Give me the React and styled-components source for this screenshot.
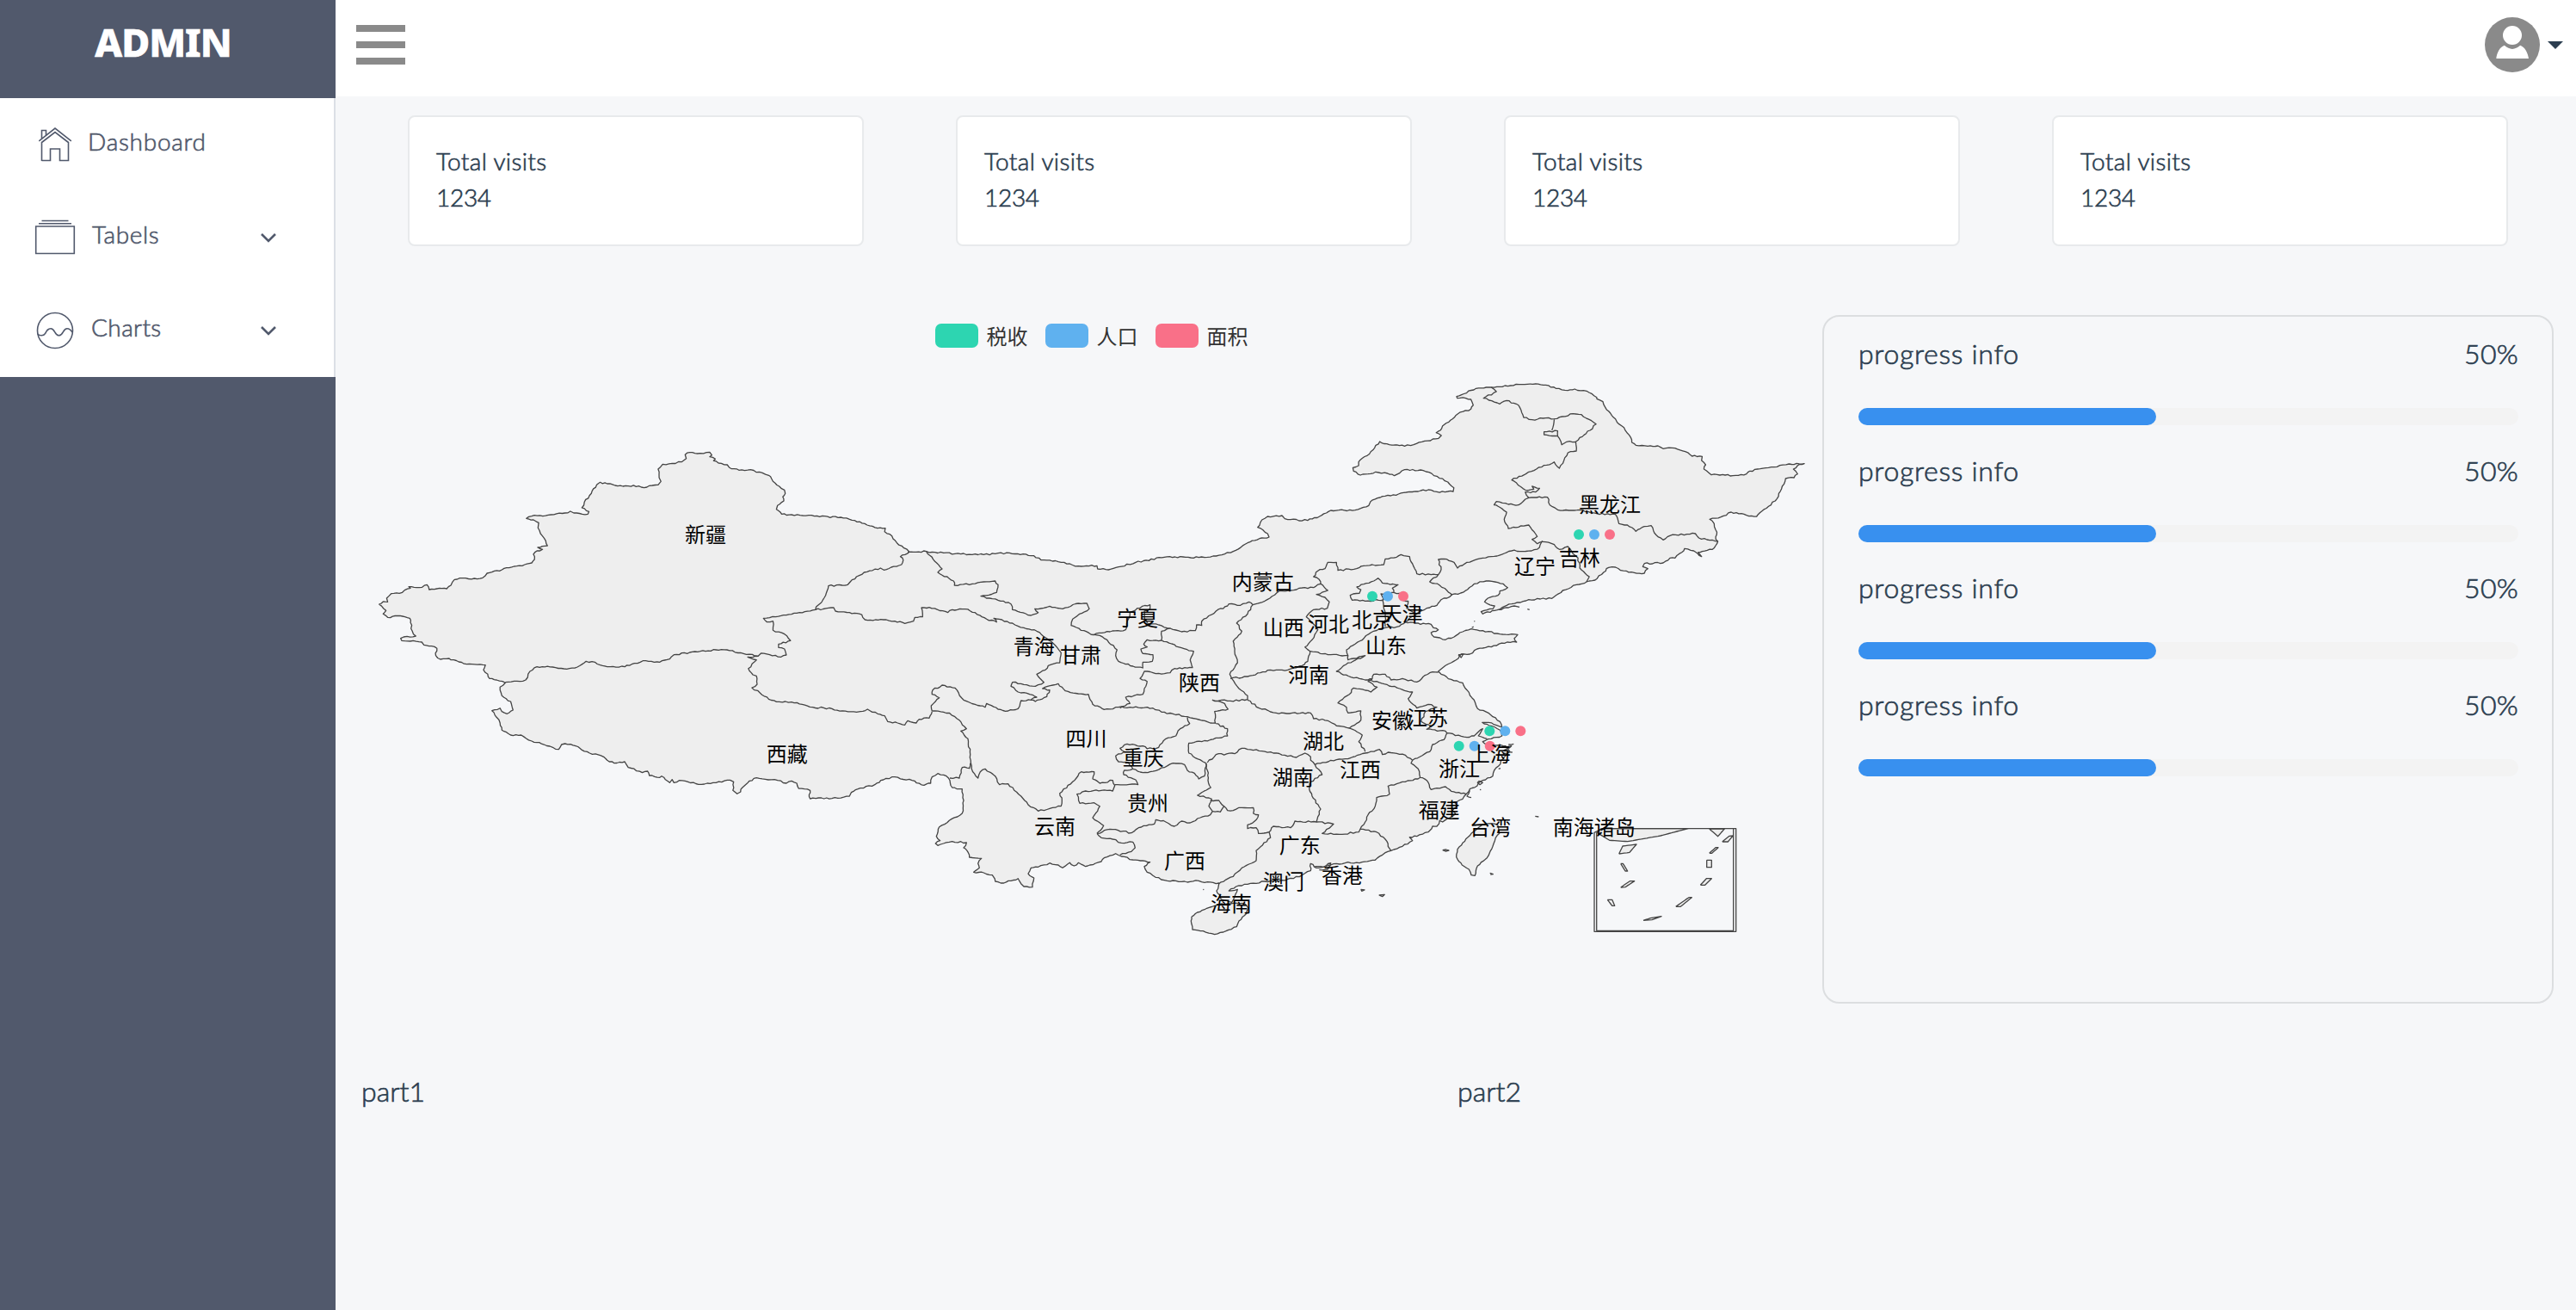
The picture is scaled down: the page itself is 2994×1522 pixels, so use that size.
import React from "react";
import styled, { createGlobalStyle } from "styled-components";

const GlobalStyle = createGlobalStyle`
  *, *::before, *::after { box-sizing: border-box; }
  body {
    margin: 0;
    background: #f6f7f9;
    color: #2c3e50;
    font-family: Lato, "Noto Sans CJK SC", sans-serif;
    font-size: 28px;
    font-weight: 300;
    -webkit-text-stroke: 0.65px currentColor;
  }
`;

/* ---------- shell ---------- */

const Shell = styled.div`
  display: flex;
  width: 2994px;
  height: 1522px;
  overflow: hidden;
`;

const Sidebar = styled.aside`
  flex: none;
  width: 390px;
  background: #51596c;
`;

const Brand = styled.h1`
  display: flex;
  justify-content: center;
  height: 114px;
  margin: 0;
  padding: 19px 11px 0 0;
  color: #fff;
  font-family: "Noto Sans", sans-serif;
  font-size: 45px;
  font-weight: 800;
  line-height: 60px;
  letter-spacing: -1px;
`;

const Menu = styled.nav`
  background: #fff;
  border-right: 2px solid #dcdfe6;
`;

const MenuItem = styled.a`
  display: flex;
  align-items: center;
  height: 108px;
  padding: 0 66px 0 40px;
  color: #51596c;
`;

const MenuIcon = styled.svg`
  flex: none;
  width: 48px;
  height: 48px;
  fill: none;
  stroke: currentColor;
  stroke-width: 1.6;
`;

const MenuLabel = styled.span`
  flex: 1;
  padding: 0 0 9px ${(p) => p.$indent}px;
  letter-spacing: ${(p) => p.$spacing}px;
`;

const Chevron = styled.svg`
  width: 20px;
  height: 14px;
  fill: none;
  stroke: #51596c;
  stroke-width: 2.6;
`;

const Main = styled.main`
  flex: 1;
  min-width: 0;
`;

const TopBar = styled.header`
  display: flex;
  align-items: center;
  justify-content: space-between;
  height: 112px;
  padding: 0 15px 8px 23.5px;
  background: #fff;
`;

const Burger = styled.button`
  display: grid;
  gap: 11px;
  width: 57px;
  padding: 0;
  border: 0;
  background: none;
`;

const BurgerLine = styled.span`
  height: 8px;
  background: #8a8a8a;
`;

const Account = styled.div`
  display: flex;
  align-items: center;
  gap: 9px;
`;

const Caret = styled.span`
  border: 9px solid transparent;
  border-top-color: #2c3e50;
  border-bottom: 0;
`;

/* ---------- stat cards ---------- */

const Cards = styled.section`
  display: grid;
  grid-template-columns: repeat(4, 530px);
  gap: 107px;
  padding: 22px 0 0 84px;
`;

const Card = styled.article`
  height: 152px;
  padding: 30px 31px;
  border: 2px solid #e8eaec;
  border-radius: 8px;
  background: #fff;
  line-height: 42px;
`;

const CardLine = styled.div`
  letter-spacing: ${(p) => p.$spacing}px;
`;

/* ---------- map and progress ---------- */

const Overview = styled.section`
  display: flex;
  height: 800px;
  margin-top: 80px;
  padding-left: 28px;
`;

const MapPanel = styled.div`
  flex: none;
  width: 1700px;
  padding-top: 10px;
`;

const Legend = styled.ul`
  display: flex;
  justify-content: center;
  gap: 20px;
  margin: 0 0 0 1px;
  padding: 0;
  list-style: none;
`;

const LegendItem = styled.li`
  display: flex;
  align-items: center;
  gap: 10px;
  height: 28px;
  color: #333;
  font-family: "Noto Sans CJK SC", sans-serif;
  font-size: 24px;
  font-weight: 400;
  line-height: 26px;
  -webkit-text-stroke: 0;
`;

const Swatch = styled.span`
  width: 50px;
  height: 28px;
  border-radius: 7px;
  background: ${(p) => p.$color};
`;

const MapSvg = styled.svg`
  display: block;
  width: 1700px;
  height: 730px;
`;

const Land = styled.path`
  fill: #eee;
  stroke: #444;
  stroke-width: 1.3;
  stroke-linejoin: round;
`;

const Border = styled.path`
  fill: none;
  stroke: #444;
  stroke-width: 1.3;
  stroke-linejoin: round;
`;

const MapLabel = styled.text`
  fill: #000;
  font-family: "Noto Sans CJK SC", sans-serif;
  font-size: 24px;
  font-weight: 400;
  text-anchor: middle;
  -webkit-text-stroke: 0;
`;

const ProgressPanel = styled.div`
  width: 850px;
  height: 800px;
  padding: 22px 39px 0 40px;
  border: 2px solid #dcdee0;
  border-radius: 20px;
`;

const ProgressItem = styled.div`
  height: 136px;
`;

const ProgressHead = styled.div`
  display: flex;
  justify-content: space-between;
  height: 84px;
  font-size: 32px;
  line-height: 41px;
`;

const ProgressText = styled.span`
  letter-spacing: ${(p) => p.$spacing}px;
`;

const Track = styled.div`
  height: 20px;
  border-radius: 10px;
  background: #f3f3f3;
`;

const Fill = styled.div`
  width: 346px;
  height: 20px;
  border-radius: 10px;
  background: #3890ef;
`;

const Parts = styled.section`
  display: grid;
  grid-template-columns: 1274px 1274px;
  padding: 81px 0 0 30px;
  font-size: 32px;
  line-height: 42px;
`;

/* ---------- map geometry ---------- */

const sheet = (ox, oy, sx, sy) => (list) => {
  const n = list.trim().split(/[\s,]+/).map(Number);
  const out = [];
  for (let i = 0; i < n.length; i += 2) out.push([ox + n[i] / sx, oy + n[i + 1] / sy]);
  return out;
};

const west = sheet(420, 500, 2.45, 3);
const mid = sheet(1000, 600, 3, 3);
const east = sheet(1380, 600, 3, 3);
const north = sheet(1500, 430, 2.529, 3);
const sea = sheet(1700, 880, 3, 3);

const noise = (x, y) => {
  const s = Math.sin(x * 12.9898 + y * 78.233) * 43758.5453;
  return (s - Math.floor(s)) * 2 - 1;
};

/* Breaks each segment into short uneven steps, like a surveyed boundary. */
const trace = (points, rough = 0.9) => {
  let d = `M${points[0][0].toFixed(1)} ${points[0][1].toFixed(1)}`;
  for (let i = 1; i < points.length; i++) {
    const [ax, ay] = points[i - 1];
    const [bx, by] = points[i];
    const len = Math.hypot(bx - ax, by - ay);
    const steps = Math.max(1, Math.round(len / 3.2));
    for (let k = 1; k < steps; k++) {
      const t = k / steps;
      const x = ax + (bx - ax) * t;
      const y = ay + (by - ay) * t;
      const o = noise(x, y) * rough;
      d += `L${(x - ((by - ay) / len) * o).toFixed(1)} ${(y + ((bx - ax) / len) * o).toFixed(1)}`;
    }
    d += `L${bx.toFixed(1)} ${by.toFixed(1)}`;
  }
  return d;
};

const mainland = [
  ...west(`50,606 62,597 75,598 72,585 85,569 108,568 140,550 135,545 165,548 187,538 193,555 215,552 243,552 255,540
    265,520 280,515 330,518 352,508 358,498 400,486 435,474 465,468 485,462 493,450 490,432 500,420 516,415 502,408
    515,404 530,402 525,385 510,360 503,340 505,322 490,312 470,307 485,299 540,294 580,288 595,282 605,288 645,292
    648,283 628,270 635,250 655,220 670,190 680,181 700,186 730,194 790,194 805,200 820,193 845,190 853,178 848,165
    845,135 858,118 885,115 912,110 925,98 922,85 935,77 965,80 992,76 998,86 992,92 1008,100 1003,106 1025,115
    1042,120 1048,130 1075,139 1108,137 1125,146 1142,148 1160,157 1168,168 1172,178 1190,195 1205,208 1207,220
    1200,232 1203,246 1185,262 1182,275 1197,292 1225,294 1290,299 1365,303 1405,314 1440,330 1470,341 1492,341
    1490,353 1505,362 1525,392 1545,410 1560,423`),
  ...mid(`167,125 230,122 330,130 430,133 520,127 605,137 630,152 690,158 760,173 825,172 827,183 865,186 900,176
    960,160 1060,142 1180,143 1230,138 1300,122 1350,92 1400,75 1425,72 1420,60 1385,38 1400,12 1420,0`),
  ...east(`330,-3 340,8 360,11`),
  ...north(`0,521 50,524 85,510 118,489 190,488 230,472 235,458 270,440 310,436 340,426 375,423 405,417 430,424 478,423
    480,410 462,390 430,370 390,350 335,347 305,368 285,360 250,355 205,366 185,352 183,340 200,333 200,320 225,298
    262,249 290,260 335,265 370,256 435,238 443,228 428,218 440,210 452,190 470,175 492,152 530,136 537,122 530,102
    515,98 490,98 488,92 545,64 590,60 630,54 680,50 720,48 750,52 780,64 815,71 835,66 870,73 885,82 900,95 900,100
    918,110 925,130 940,150 955,170 960,182 980,200 990,220 1000,235 1003,252 1015,262 1050,265 1080,264 1095,274
    1130,272 1160,284 1180,300 1210,301 1208,315 1220,330 1215,345 1237,365 1270,364 1300,368 1340,362 1350,352
    1380,344 1430,337 1465,327 1510,326 1490,333 1478,345 1490,362 1480,375 1455,378 1445,405 1435,430 1430,448
    1405,475 1385,492 1370,510 1340,506 1295,495 1265,512 1232,520 1245,535 1253,565 1250,590 1256,597 1240,625
    1210,632 1198,635 1208,650 1185,630 1158,622 1150,635 1130,655 1115,655 1095,672 1040,674 1035,685 1050,692
    1040,708 1010,706 970,698 955,687 935,688 920,705 895,732 870,738 840,748 800,768 768,796 700,800 650,815
    600,838 565,850 560,842 595,832 600,822 580,815 570,808 580,795 610,785 615,770 638,758 625,745 600,738
    575,735 540,745 520,765 500,777 475,782`),
  ...east(`905,285 885,290 870,310 845,318 815,330 800,340 760,368 795,372 850,376 858,388 875,395 850,405 860,420
    900,430 930,420 950,405 990,392 1030,398 1080,408 1120,412 1152,412 1140,425 1148,438 1115,438 1060,455
    1010,462 985,480 955,480 945,495 920,510 900,520 875,540 885,550 920,568 960,580 975,605 1000,640 1012,670
    1050,685 1065,698 1090,715 1097,735 1050,718 1028,718 1060,730 1090,745 1097,765 1060,775 1030,785 1045,795
    1080,798 1110,800 1125,820 1100,845 1085,870 1070,885 1065,905 1030,920 1015,930 1010,940 985,950 972,968
    960,985 930,995 940,1010 925,1025 935,1035 915,1050 890,1065 880,1060 870,1080 855,1080 840,1100 800,1115
    775,1118 785,1130 750,1150 710,1165 680,1180 655,1198 600,1208 560,1205 500,1215 450,1225 430,1210 430,1235
    400,1250 370,1262 320,1270 270,1272 210,1282 170,1290 145,1305 175,1300 165,1325 155,1345 120,1335 102,1305
    110,1280`),
  ...mid(`1250,1278 1200,1276 1180,1270 1140,1275 1100,1270 1060,1268 1020,1252 1000,1240 990,1220 1010,1205 985,1200
    950,1197 910,1185 890,1175 850,1190 840,1203 800,1215 785,1220 760,1207 745,1218 730,1207 705,1225 690,1215
    660,1208 620,1222 595,1225 585,1245 605,1260 600,1292 570,1290 560,1280 550,1262 525,1270 500,1278 470,1272
    460,1250 430,1242 395,1240 415,1225 410,1210 422,1192 380,1188 372,1165 360,1155 370,1137 320,1133 270,1147
    262,1140 278,1130 265,1115 275,1082 310,1060 355,1035 360,990 355,950 320,945 312,920 300,905 270,896 250,908
    245,930 222,937 180,920 120,908 80,918 50,935 0,947`),
  ...west(`1395,1262 1390,1275 1340,1283 1310,1281 1278,1284 1275,1270 1278,1255 1245,1248 1240,1230 1225,1222
    1210,1230 1185,1220 1150,1216 1125,1211 1105,1222 1085,1245 1080,1260 1070,1267 1058,1255 1060,1225 1050,1219
    1010,1228 960,1234 930,1225 905,1220 890,1228 885,1217 878,1228 855,1205 850,1210 820,1203 815,1188 800,1193
    760,1175 750,1155 720,1160 700,1150 690,1138 650,1125 622,1108 610,1100 580,1092 570,1095 562,1112 545,1105
    520,1095 485,1083 455,1062 425,1062 400,1045 395,1020 385,1000 372,977 395,968 400,980 415,988 432,975 425,945
    400,925 395,895 410,880 385,870 365,865 360,850 348,835 353,818 300,815 255,800 250,795 225,798 212,785
    215,760 200,752 178,748 172,738 115,733 112,725 130,718 155,717 145,700 140,670 138,655 110,646 75,652
    62,640 70,628 50,606`),
];

const islands = [
  mid(`1155,1395 1175,1380 1200,1370 1250,1352 1300,1348 1340,1350 1352,1365 1345,1385 1320,1410 1312,1430 1275,1445
    1235,1457 1195,1445 1158,1440 1153,1410 1155,1395`),
  east(`1060,1070 1030,1075 990,1105 960,1138 942,1160 938,1187 958,1215 982,1230 990,1250 1003,1252 1012,1218
    1045,1190 1065,1150 1075,1120 1088,1105 1082,1075 1060,1070`),
];

const borders = [
  west(`1560,423 1535,440 1543,452 1538,468 1488,487 1478,480 1440,493 1410,510 1392,528 1385,538 1330,542 1322,575
    1310,600 1295,615 1293,625 1240,637 1180,650 1145,655 1155,668 1172,665 1172,697 1205,710 1222,733 1188,745
    1188,757 1205,762 1210,783 1195,790 1138,777 1130,787 1080,775 1025,764 965,770 890,782 878,797 850,808
    810,803 770,815 750,824 700,824 680,818 665,808 640,805 615,825 585,832 545,825 500,824 480,840 468,870 410,878`),
  [
    ...west(`1293,625 1345,618 1350,630 1390,635 1425,642`),
    ...mid(`16,360 80,360 120,365 155,373 185,365 190,352 217,350 213,318 240,317 305,335 320,325 365,323 400,335
      440,358 475,368 465,355 530,372 570,388 615,400 650,425 680,450 700,475 695,510 655,520 645,535 615,550
      640,578 610,592 560,583 530,578 525,592 550,612 600,622 615,630 595,638`),
  ],
  [
    ...west(`1130,787 1100,790 1125,800 1102,830 1115,852 1125,856 1127,885 1112,897 1135,915 1160,937 1190,946
      1225,947 1285,965 1340,970 1370,978 1410,982`),
    ...mid(`0,680 25,672 60,688 85,695 95,715 130,720 155,727 165,712 195,720 205,707 240,703 250,680`),
  ],
  mid(`250,678 247,660 275,632 250,620 252,605 285,588 330,598 360,640 400,655 435,665 440,652 480,672 515,678 550,670
    560,642 595,640 610,645 650,628 660,605 635,600 690,583 715,608 760,618 795,620 810,655 850,673 900,665 940,665
    1020,668 1050,682 1090,688 1140,698 1180,708 1220,720 1238,720`),
  mid(`250,678 310,685 345,710 370,740 350,748 375,775 383,830 388,880 410,912 418,890 435,880 470,905 485,935 515,932
    560,975 585,1005 620,1027 670,1015 700,1010 703,990 695,965 740,925 770,890 815,890 810,915 835,930 880,920
    887,938 880,957 840,955 785,957 755,968 765,1000 815,998 835,1010 810,1050 848,1078 825,1105`),
  mid(`312,912 345,912 355,875 380,878 383,860`),
  mid(`887,935 968,935 960,918 918,900 920,885 950,880`),
  mid(`825,1105 870,1090 945,1103 970,1085 1025,1072 1030,1057 1065,1065 1095,1080 1120,1062 1150,1068 1185,1050
    1220,1040 1228,1028 1215,1010 1225,985 1175,972 1222,945 1212,920 1210,885 1205,860`),
  mid(`825,1105 840,1120 880,1125 910,1138 950,1135 958,1155 945,1168 905,1180`),
  mid(`1228,1028 1255,1030 1268,1010`),
  mid(`1220,990 1250,990 1268,1010 1280,1025 1300,1025 1320,1015 1370,1015 1370,1035 1388,1040 1375,1062 1350,1075
    1350,1088 1380,1085 1388,1105 1425,1100`),
  mid(`1205,860 1175,845 1145,825 1145,790 1190,785 1250,772 1280,765 1280,740 1240,722`),
  mid(`1140,700 1148,722 1115,740 1100,765 1065,775 1040,805 1000,810 985,800 930,793 905,808 920,820 890,835
    900,855 935,858 950,880 985,893 1010,890 1060,875 1090,860 1130,865 1140,885 1165,895 1180,915 1200,905 1205,860`),
  mid(`905,668 940,652 925,630 985,620 990,600 1000,575 975,565 990,540 1030,548 1080,545 1095,530 1158,527 1150,500
    1162,470 1120,458 1050,432 1000,430 988,445 1000,455 978,462 985,478 1020,482 1018,505 985,508 985,528 950,522
    900,505 890,485 895,465 860,430 835,415 805,412`),
  mid(`805,412 870,402 925,395 940,335 965,320 1010,308 1010,322 990,330 990,350 1000,372 1040,378 1080,390
    1050,400 1050,432`),
  mid(`230,122 285,183 270,195 325,225 328,240 390,235 430,228 470,225 480,238 475,265 420,278 480,292 525,305
    530,325 595,345 620,335 608,322 660,313 705,322 760,303 790,303 798,322 740,358 735,380 805,412`),
  mid(`1080,390 1120,402 1168,398 1172,378 1190,380 1190,365 1240,330 1280,312 1285,305 1325,310 1355,298 1368,308
    1350,340 1312,372 1330,400 1300,435 1305,470 1315,510 1288,550 1295,565 1320,600 1350,625 1350,638 1290,643
    1228,640 1270,652 1282,672 1235,680 1238,722`),
  east(`228,308 270,295 320,260 360,258 390,250 440,248 465,235 490,258 450,272 480,282 495,298 488,320 440,325
    415,350 430,365 455,395 435,430 410,455 428,470 420,505 400,520 350,535 290,535 210,558 150,565`),
  east(`465,235 460,220 440,210 455,190 480,182 490,160 520,160 525,188 590,182 615,172 685,168 690,148 730,142
    745,133 775,140 785,165 800,200 850,203 875,203 845,228 880,240 905,258 923,275`),
  east(`875,203 885,185 875,150 895,148 930,160 942,180 975,160 1030,145 1080,138 1130,120 1200,120 1228,108 1238,85`),
  north(`740,598 775,608 790,625 815,615 830,640 845,655 850,690 878,720 870,738`),
  north(`740,598 725,605 710,590 725,580 700,540 640,552 628,520 635,495 610,475 598,470 605,458 640,468 670,470
    690,450 700,445 755,443 762,470 785,487 850,487 900,500 955,503 965,535 990,540 1015,562 1040,545 1060,542
    1075,575 1095,592 1115,577 1190,570 1200,585 1256,597`),
  north(`700,445 690,425 720,425 732,412 710,405 715,415 690,418 650,383 700,355 775,320 790,342 815,288 840,282
    838,250 820,248 797,260 785,230 745,225 745,215 785,212 785,230`),
  north(`590,60 605,75 567,98 615,118 635,106 670,122 685,165 710,173 750,167 775,170 830,152 855,155 898,188
    880,210 850,235 838,250`),
  north(`768,210 775,172`),
  east(`590,245 650,225 665,215 680,232 735,238 715,250 720,265 675,270 685,290 620,295 575,292 568,275 600,268
    605,255 590,245`),
  east(`720,265 750,270 745,290 770,295 765,320 790,335`),
  east(`680,290 685,320 690,350 690,385`),
  east(`428,470 490,482 560,485 555,465 600,435 640,405 680,390 730,385 760,368`),
  east(`560,485 560,500 620,485 545,520 520,540 570,560 630,570 660,575 740,600 785,612 770,635 800,668 840,655
    870,665 830,680 815,715 850,730 835,742 900,748 905,755`),
  east(`630,570 645,565 650,550 690,550 710,570 750,565 800,577 845,545 875,543`),
  east(`645,568 630,575 662,595 640,612 580,598 565,620 525,650 555,665 560,685 605,678 605,710 565,738`),
  east(`210,640 250,668 310,685 430,685 440,705 490,712 520,730 565,738 610,762 598,785 620,820`),
  east(`70,858 100,830 165,827 190,808 260,818 340,832 380,840 410,825 430,838 430,850 445,865 500,850 560,845
    620,825 670,812 680,830 700,822 760,832 785,850 845,820 855,795 895,778 905,755 975,770 1000,765 1030,740
    1015,765 1045,775`),
  east(`785,850 780,860 805,880 812,910 835,920 850,952 900,942 920,958 972,968`),
  east(`812,910 760,925 700,940 705,968 660,980 655,1010 630,1040 620,1065 603,1090 660,1100 690,1125 710,1165`),
  east(`445,865 470,900 430,925 425,950 435,975 465,1020 450,1065`),
  east(`285,1100 300,1080 360,1085 375,1062 450,1065 510,1072 470,1105 530,1108 598,1100 603,1090`),
  east(`285,1100 290,1120 240,1165 240,1200 190,1225 160,1255 110,1280`),
  east(`890,1163 902,1161 912,1164 900,1167 890,1163`),
  east(`605,1300 618,1302 608,1306 605,1300`),
  east(`668,1320 688,1318 680,1325 668,1320`),
  east(`1055,1243 1066,1247 1057,1248`),
  east(`1213,1045 1225,1047`),
  east(`1018,922 1030,928 1020,935 1012,928 1018,922`),
  east(`1095,805 1130,800 1105,815 1132,822 1100,825`),
  east(`1120,795 1138,793`),
  east(`1085,880 1092,878`),
  east(`1020,952 1024,953`),
  east(`945,482 962,480 955,492 945,482`),
  east(`1085,325 1120,318 1140,312 1158,316`),
  east(`1186,323 1193,325`),
  east(`1000,365 1003,366`),
  east(`992,388 998,384`),
  east(`985,955 975,975 990,980`),
  east(`445,1220 475,1222 500,1208 490,1230 460,1232`),
  east(`55,1300 58,1301`),
];

const seaFills = [
  sea(`485,248 785,248 690,273 575,293 512,289 468,262 485,248`),
  sea(`860,249 913,249 890,275 860,249`),
];

const seaMarks = [
  sea(`545,336 558,309 606,303 582,331 545,336`),
  sea(`551,370 559,370 575,396 567,396 551,370`),
  sea(`551,453 583,431 599,431 567,452 551,453`),
  sea(`505,496 521,496 530,517 521,517 505,496`),
  sea(`630,568 655,560 693,554 660,566 630,568`),
  sea(`743,520 789,488 799,488 760,520 743,520`),
  sea(`829,445 850,422 868,422 845,445 829,445`),
  sea(`851,358 868,358 868,383 851,383 851,358`),
  sea(`860,334 882,314 891,314 869,334 860,334`),
  sea(`905,294 930,274 943,273 925,294 905,294`),
];

const seaFrame = [
  sea(`485,248 953,248 953,607 459,607 459,262 485,248`),
  sea(`944,248 944,604 467,604 467,262`),
];

const regions = [
  ["新疆", 820, 621.7], ["西藏", 914.7, 876.7], ["青海", 1201.7, 751.7], ["甘肃", 1256, 761.7],
  ["宁夏", 1322, 718], ["内蒙古", 1467.7, 676], ["山西", 1491.7, 729], ["河北", 1544, 725.7],
  ["北京", 1595, 720], ["天津", 1629.7, 713], ["山东", 1611, 750.7], ["河南", 1521, 784.7],
  ["陕西", 1394, 793.7], ["四川", 1262.5, 858.7], ["重庆", 1328.7, 880], ["贵州", 1334, 933],
  ["云南", 1226, 960.7], ["广西", 1377, 1000.7], ["湖北", 1538, 861], ["湖南", 1502.7, 903.5],
  ["江西", 1581, 894.7], ["安徽", 1618, 837.3], ["江苏", 1659, 834], ["上海", 1731.7, 876.7],
  ["浙江", 1696, 893.7], ["福建", 1672.7, 941.7], ["台湾", 1732, 961], ["广东", 1510.7, 982.7],
  ["澳门", 1492, 1024.7], ["香港", 1560, 1017.3], ["海南", 1431, 1050.7], ["辽宁", 1784, 658],
  ["吉林", 1835.7, 648.7], ["黑龙江", 1871, 586.7], ["南海诸岛", 1852.7, 961.7],
];

const series = [
  { name: "税收", color: "#2dd5b1" },
  { name: "人口", color: "#5fb1ef" },
  { name: "面积", color: "#f97088" },
];

const clusters = [
  [1595, 692.7], [1835, 621], [1731.3, 849.3], [1695.7, 866.7],
];

function ChinaMap() {
  return (
    <MapSvg viewBox="418 404 1700 730">
      <Land d={trace(mainland)} />
      {islands.map((p, i) => <Land key={i} d={trace(p, 0.6)} />)}
      {borders.map((p, i) => <Border key={i} d={trace(p)} />)}
      {seaFills.map((p, i) => <Land key={i} d={trace(p, 0)} />)}
      {seaMarks.map((p, i) => <Land key={i} d={trace(p, 0)} />)}
      {seaFrame.map((p, i) => <Border key={i} d={trace(p, 0)} />)}
      {clusters.map(([x, y]) =>
        series.map((s, i) => <circle key={`${x}${s.name}`} cx={x + i * 18} cy={y} r="6" fill={s.color} />)
      )}
      {regions.map(([name, x, y]) => (
        <MapLabel key={name} x={x} y={y + 8.6}>{name}</MapLabel>
      ))}
    </MapSvg>
  );
}

/* ---------- icons ---------- */

const HomeIcon = () => (
  <MenuIcon viewBox="40 144 48 48">
    <path d="M45.3 163.8 64 149l18.8 14.8M48.5 187V165.5L64 153.5l15.5 12V186.500H69.500V173H58.500V186.500H48.500M48.500 161V151.500H53.500V157" />
  </MenuIcon>
);

const TableIcon = () => (
  <MenuIcon viewBox="40 252 48 48">
    <path d="M41.700 263H86.300V294.500H41.700ZM45 259.700H83M48.500 256.500H79.500" />
  </MenuIcon>
);

const ChartIcon = () => (
  <MenuIcon viewBox="40 359 48 48">
    <circle cx="64" cy="383" r="20.500" />
    <path d="M43.800 387C46 389.500 50.500 389.500 52.500 386.500C54.500 383 55.500 380.800 59 380.800C64 380.800 63.500 388.800 68.500 388.800C73.500 388.800 73 380.800 78 380.800C81 380.800 82.500 382.500 84 385" />
  </MenuIcon>
);

const Avatar = () => (
  <svg width="64" height="64" viewBox="0 0 64 64">
    <circle cx="32" cy="32" r="32" fill="#8a8a8a" />
    <circle cx="32" cy="21" r="11" fill="#fff" />
    <path d="M13.300 48C14 41.500 17.500 34.500 22.800 32.800Q32 41 41.200 32.800C46.500 34.500 50 41.500 51 48Z" fill="#fff" />
  </svg>
);

const menu = [
  { label: "Dashboard", Icon: HomeIcon, indent: 14, spacing: 0.75 },
  { label: "Tabels", Icon: TableIcon, indent: 19, spacing: 0.6, open: true },
  { label: "Charts", Icon: ChartIcon, indent: 18, spacing: 0.4, open: true },
];

export default function App() {
  return (
    <Shell>
      <GlobalStyle />
      <Sidebar>
        <Brand>ADMIN</Brand>
        <Menu>
          {menu.map(({ label, Icon, indent, spacing, open }) => (
            <MenuItem key={label}>
              <Icon />
              <MenuLabel $indent={indent} $spacing={spacing}>{label}</MenuLabel>
              {open && (
                <Chevron viewBox="0 0 20 14">
                  <path d="M2 3l8 8 8-8" />
                </Chevron>
              )}
            </MenuItem>
          ))}
        </Menu>
      </Sidebar>
      <Main>
        <TopBar>
          <Burger>
            <BurgerLine />
            <BurgerLine />
            <BurgerLine />
          </Burger>
          <Account>
            <Avatar />
            <Caret />
          </Account>
        </TopBar>
        <Cards>
          {[0, 1, 2, 3].map((i) => (
            <Card key={i}>
              <CardLine $spacing={0.35}>Total visits</CardLine>
              <CardLine $spacing={-0.3}>1234</CardLine>
            </Card>
          ))}
        </Cards>
        <Overview>
          <MapPanel>
            <Legend>
              {series.map((s) => (
                <LegendItem key={s.name}>
                  <Swatch $color={s.color} />
                  {s.name}
                </LegendItem>
              ))}
            </Legend>
            <ChinaMap />
          </MapPanel>
          <ProgressPanel>
            {[0, 1, 2, 3].map((i) => (
              <ProgressItem key={i}>
                <ProgressHead>
                  <ProgressText $spacing={0.7}>progress info</ProgressText>
                  <ProgressText $spacing={0.3}>50%</ProgressText>
                </ProgressHead>
                <Track>
                  <Fill />
                </Track>
              </ProgressItem>
            ))}
          </ProgressPanel>
        </Overview>
        <Parts>
          <div>part1</div>
          <div>part2</div>
        </Parts>
      </Main>
    </Shell>
  );
}
